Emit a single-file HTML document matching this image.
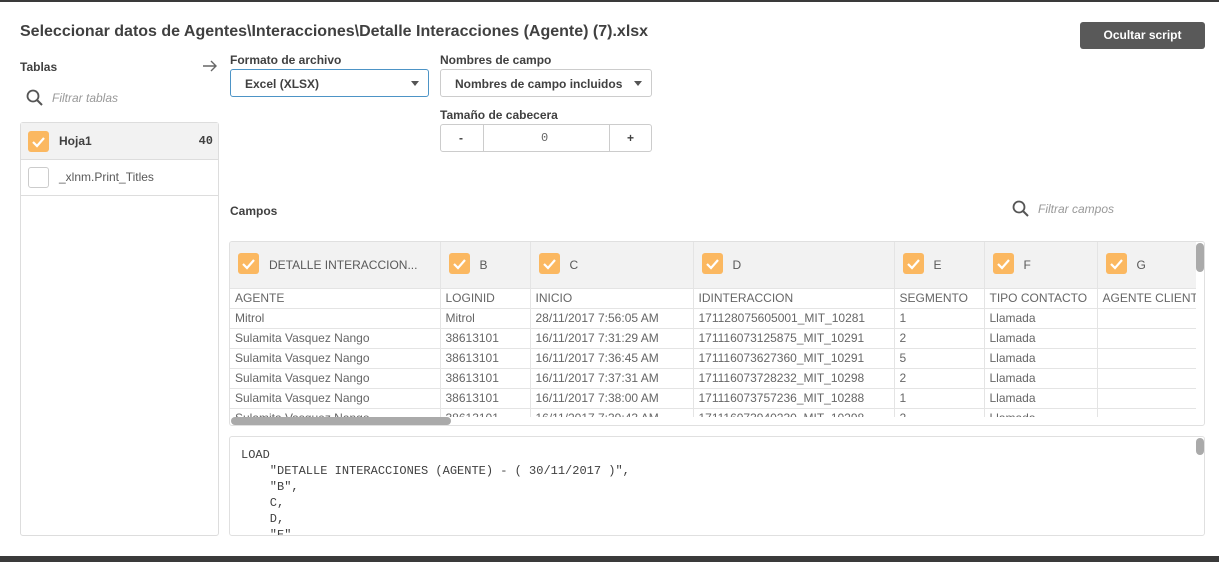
<!DOCTYPE html>
<html><head><meta charset="utf-8"><style>
*{margin:0;padding:0;box-sizing:border-box}
body{width:1232px;height:584px;background:#fff;position:relative;overflow:hidden;font-family:"Liberation Sans",sans-serif;color:#404040}
.a{position:absolute}
.lbl{font-size:12px;font-weight:bold;color:#404040}
.cb{position:absolute;width:21px;height:21px;border-radius:3px;background:#fbb861}
.cb svg{position:absolute;left:3px;top:4px}
.sel{position:absolute;border:1px solid #ccc;border-radius:3px;background:#fff;font-size:12px;font-weight:bold;color:#404040}
.caret{position:absolute;width:0;height:0;border-left:4px solid transparent;border-right:4px solid transparent;border-top:5px solid #555}
table{border-collapse:collapse;font-size:12px;color:#666}
td{border:1px solid #e4e4e4;height:20px;padding:0 5px;white-space:nowrap;overflow:hidden;line-height:18px}
.hd td{height:46px;background:#f2f2f2;position:relative;font-size:12px;color:#595959;border-top:none}
td:first-child{border-left:none}
</style></head><body>
<div class="a" style="left:0;top:0;width:1219px;height:2px;background:#3a3a3a"></div>
<div class="a" style="left:20px;top:23px;font-size:16px;font-weight:bold;color:#404040">Seleccionar datos de Agentes\Interacciones\Detalle Interacciones (Agente) (7).xlsx</div>
<div class="a" style="left:1080px;top:22px;width:125px;height:27px;background:#595959;border-radius:3px;color:#fff;font-size:12px;font-weight:bold;text-align:center;line-height:27px">Ocultar script</div>

<div class="a lbl" style="left:20px;top:60px">Tablas</div>
<svg class="a" style="left:202px;top:60px" width="16" height="12"><path d="M1 6h13M9 1l5 5-5 5" fill="none" stroke="#666" stroke-width="1.4"/></svg>
<svg class="a" style="left:26px;top:89px" width="18" height="18"><circle cx="7" cy="7" r="5.5" fill="none" stroke="#555" stroke-width="1.8"/><line x1="11" y1="11" x2="16" y2="16" stroke="#555" stroke-width="2"/></svg>
<div class="a" style="left:52px;top:91px;font-size:12px;font-style:italic;color:#999">Filtrar tablas</div>

<div class="a" style="left:20px;top:122px;width:199px;height:414px;border:1px solid #ddd;border-radius:3px">
 <div style="height:37px;background:#f2f2f2;border-bottom:1px solid #ddd;position:relative">
  <div class="cb" style="left:7px;top:8px"><svg width="15" height="13"><path d="M2 7l4 4 7-8" fill="none" stroke="#fff" stroke-width="2.2"/></svg></div>
  <div class="a" style="left:38px;top:11px;font-size:12px;font-weight:bold">Hoja1</div>
  <div class="a" style="right:5px;top:11px;font-size:12px;font-weight:bold;font-family:'Liberation Mono',monospace">40</div>
 </div>
 <div style="height:36px;border-bottom:1px solid #ddd;position:relative">
  <div class="a" style="left:7px;top:7px;width:21px;height:21px;border:1px solid #ccc;border-radius:3px"></div>
  <div class="a" style="left:38px;top:10px;font-size:12px;color:#595959">_xlnm.Print_Titles</div>
 </div>
</div>

<div class="a lbl" style="left:230px;top:53px">Formato de archivo</div>
<div class="sel" style="left:230px;top:69px;width:199px;height:28px;border-color:#4d94c6"><span class="a" style="left:14px;top:7px">Excel (XLSX)</span><div class="caret" style="left:180px;top:11px"></div></div>
<div class="a lbl" style="left:440px;top:53px">Nombres de campo</div>
<div class="sel" style="left:440px;top:69px;width:212px;height:28px"><span class="a" style="left:14px;top:7px">Nombres de campo incluidos</span><div class="caret" style="left:193px;top:11px"></div></div>
<div class="a lbl" style="left:440px;top:108px">Tamaño de cabecera</div>
<div class="sel" style="left:440px;top:124px;width:212px;height:28px">
 <span class="a" style="left:18px;top:6px">-</span>
 <div class="a" style="left:42px;top:0;width:1px;height:26px;background:#ccc"></div>
 <span class="a" style="left:100px;top:6px;font-weight:normal;color:#666;font-family:'Liberation Mono',monospace">0</span>
 <div class="a" style="left:168px;top:0;width:1px;height:26px;background:#ccc"></div>
 <span class="a" style="left:186px;top:6px">+</span>
</div>

<div class="a lbl" style="left:230px;top:204px">Campos</div>
<svg class="a" style="left:1012px;top:200px" width="18" height="18"><circle cx="7" cy="7" r="5.5" fill="none" stroke="#555" stroke-width="1.8"/><line x1="11" y1="11" x2="16" y2="16" stroke="#555" stroke-width="2"/></svg>
<div class="a" style="left:1038px;top:202px;font-size:12px;font-style:italic;color:#999">Filtrar campos</div>

<div class="a" style="left:229px;top:241px;width:976px;height:185px;border:1px solid #e0e0e0;border-radius:3px;overflow:hidden">
 <div class="a" style="left:0;top:0;width:966px;height:175px;overflow:hidden">
 <table style="table-layout:fixed;width:1000px">
 <colgroup><col style="width:210px"><col style="width:90px"><col style="width:163px"><col style="width:201px"><col style="width:90px"><col style="width:113px"><col style="width:133px"></colgroup>
 <tr class="hd">
  <td><div class="cb" style="left:8px;top:11px"><svg width="15" height="13"><path d="M2 7l4 4 7-8" fill="none" stroke="#fff" stroke-width="2.2"/></svg></div><span style="margin-left:34px">DETALLE INTERACCION...</span></td>
  <td><div class="cb" style="left:8px;top:11px"><svg width="15" height="13"><path d="M2 7l4 4 7-8" fill="none" stroke="#fff" stroke-width="2.2"/></svg></div><span style="margin-left:34px">B</span></td>
  <td><div class="cb" style="left:8px;top:11px"><svg width="15" height="13"><path d="M2 7l4 4 7-8" fill="none" stroke="#fff" stroke-width="2.2"/></svg></div><span style="margin-left:34px">C</span></td>
  <td><div class="cb" style="left:8px;top:11px"><svg width="15" height="13"><path d="M2 7l4 4 7-8" fill="none" stroke="#fff" stroke-width="2.2"/></svg></div><span style="margin-left:34px">D</span></td>
  <td><div class="cb" style="left:8px;top:11px"><svg width="15" height="13"><path d="M2 7l4 4 7-8" fill="none" stroke="#fff" stroke-width="2.2"/></svg></div><span style="margin-left:34px">E</span></td>
  <td><div class="cb" style="left:8px;top:11px"><svg width="15" height="13"><path d="M2 7l4 4 7-8" fill="none" stroke="#fff" stroke-width="2.2"/></svg></div><span style="margin-left:34px">F</span></td>
  <td><div class="cb" style="left:8px;top:11px"><svg width="15" height="13"><path d="M2 7l4 4 7-8" fill="none" stroke="#fff" stroke-width="2.2"/></svg></div><span style="margin-left:34px">G</span></td>
 </tr>
 <tr><td>AGENTE</td><td>LOGINID</td><td>INICIO</td><td>IDINTERACCION</td><td>SEGMENTO</td><td>TIPO CONTACTO</td><td>AGENTE CLIENTE</td></tr>
 <tr><td>Mitrol</td><td>Mitrol</td><td>28/11/2017 7:56:05 AM</td><td>171128075605001_MIT_10281</td><td>1</td><td>Llamada</td><td></td></tr>
 <tr><td>Sulamita Vasquez Nango</td><td>38613101</td><td>16/11/2017 7:31:29 AM</td><td>171116073125875_MIT_10291</td><td>2</td><td>Llamada</td><td></td></tr>
 <tr><td>Sulamita Vasquez Nango</td><td>38613101</td><td>16/11/2017 7:36:45 AM</td><td>171116073627360_MIT_10291</td><td>5</td><td>Llamada</td><td></td></tr>
 <tr><td>Sulamita Vasquez Nango</td><td>38613101</td><td>16/11/2017 7:37:31 AM</td><td>171116073728232_MIT_10298</td><td>2</td><td>Llamada</td><td></td></tr>
 <tr><td>Sulamita Vasquez Nango</td><td>38613101</td><td>16/11/2017 7:38:00 AM</td><td>171116073757236_MIT_10288</td><td>1</td><td>Llamada</td><td></td></tr>
 <tr><td>Sulamita Vasquez Nango</td><td>38613101</td><td>16/11/2017 7:39:43 AM</td><td>171116073940230_MIT_10298</td><td>2</td><td>Llamada</td><td></td></tr>
 </table>
 </div>
 <div class="a" style="left:966px;top:1px;width:8px;height:29px;background:#aaa;border-radius:4px"></div>
 <div class="a" style="left:1px;top:175px;width:220px;height:8px;background:#aaa;border-radius:4px"></div>
</div>

<div class="a" style="left:229px;top:436px;width:976px;height:100px;border:1px solid #e0e0e0;border-radius:3px;overflow:hidden">
 <pre style="position:absolute;left:11px;top:10px;font-family:'Liberation Mono',monospace;font-size:12px;line-height:16px;color:#404040">LOAD
    "DETALLE INTERACCIONES (AGENTE) - ( 30/11/2017 )",
    "B",
    C,
    D,
    "E",</pre>
 <div class="a" style="left:966px;top:1px;width:8px;height:17px;background:#aaa;border-radius:4px"></div>
</div>

<div class="a" style="left:0;top:556px;width:1219px;height:6px;background:#3a3a3a"></div>
</body></html>
